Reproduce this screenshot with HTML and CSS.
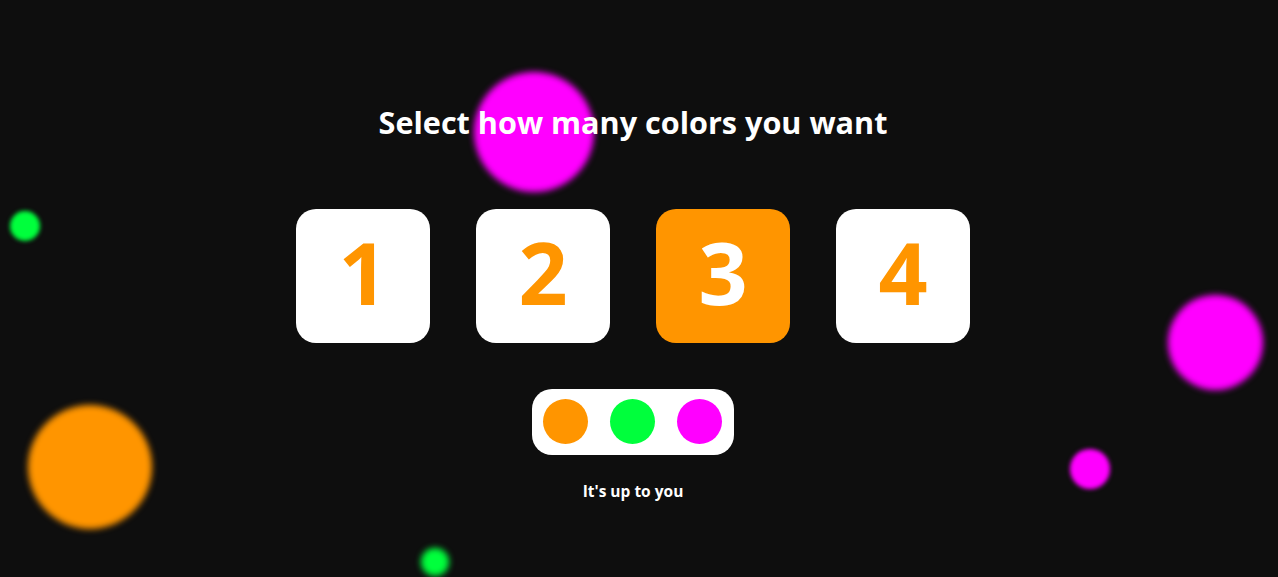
FILE: index.html
```html
<!DOCTYPE html>
<html lang="en">
<head>
<meta charset="utf-8">
<title>Select colors</title>
<link rel="stylesheet" href="styles.css">
</head>
<body>
<div class="bg">
  <span class="blob blob-m1"></span>
  <span class="blob blob-g1"></span>
  <span class="blob blob-o1"></span>
  <span class="blob blob-m2"></span>
  <span class="blob blob-m3"></span>
  <span class="blob blob-g2"></span>
</div>
<main class="content">
  <h1 class="title">Select how many colors you want</h1>
  <div class="cards">
    <button class="card">1</button>
    <button class="card">2</button>
    <button class="card active">3</button>
    <button class="card">4</button>
  </div>
  <div class="swatches">
    <span class="dot orange"></span>
    <span class="dot green"></span>
    <span class="dot magenta"></span>
  </div>
  <p class="note">It's up to you</p>
</main>
</body>
</html>
```
FILE: styles.css
```css
html, body {
  margin: 0;
  padding: 0;
  height: 100%;
}
body {
  background: #0e0e0e;
  overflow: hidden;
  position: relative;
  font-family: "Open Sans", "Noto Sans", sans-serif;
  color: #fff;
}
.bg {
  position: absolute;
  inset: 0;
  z-index: 0;
}
.blob {
  position: absolute;
  border-radius: 50%;
  filter: blur(3px);
}
.blob-m1 { left: 474px; top: 72px; width: 120px; height: 120px; background: #ff00ff; }
.blob-g1 { left: 10px; top: 211px; width: 30px; height: 30px; background: #00ff3c; filter: blur(2px); }
.blob-o1 { left: 28px; top: 405px; width: 124px; height: 124px; background: #ff9500; }
.blob-m2 { left: 1168px; top: 295px; width: 95px; height: 95px; background: #ff00ff; }
.blob-m3 { left: 1070px; top: 449px; width: 40px; height: 40px; background: #ff00ff; filter: blur(2px); }
.blob-g2 { left: 421px; top: 548px; width: 28px; height: 28px; background: #00ff3c; filter: blur(3px); }

.content {
  position: relative;
  z-index: 1;
  display: flex;
  flex-direction: column;
  align-items: center;
  padding: 100px 12px 0 0;
}
.title {
  margin: 0;
  font-size: 30.6px;
  font-weight: 700;
  line-height: 44px;
  letter-spacing: 0;
}
.cards {
  display: flex;
  gap: 46px;
  margin-top: 65px;
}
.card {
  width: 134px;
  height: 134px;
  border: none;
  border-radius: 20px;
  background: #fff;
  color: #ff9500;
  font-family: "Open Sans", "Noto Sans", sans-serif;
  font-weight: 700;
  font-size: 86px;
  line-height: 1;
  padding: 0 0 8px;
  display: flex;
  align-items: center;
  justify-content: center;
}
.card.active {
  background: #ff9500;
  color: #fff;
}
.swatches {
  margin-top: 46px;
  background: #fff;
  border-radius: 20px;
  display: flex;
  gap: 22px;
  padding: 10px 12px 11px 11px;
}
.dot {
  width: 45px;
  height: 45px;
  border-radius: 50%;
}
.orange { background: #ff9500; }
.green { background: #00ff3c; }
.magenta { background: #ff00ff; }
.note {
  margin: 25px 0 0;
  font-size: 15.5px;
  font-weight: 700;
}
```
